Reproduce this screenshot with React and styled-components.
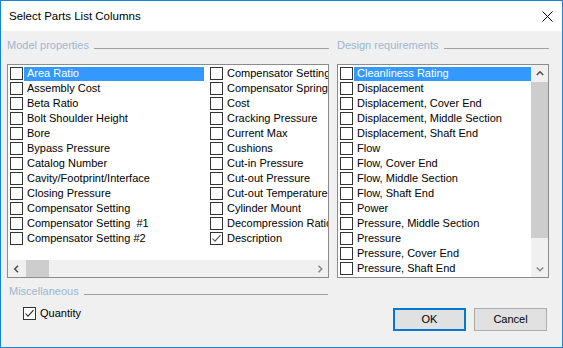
import React from 'react';
import styled, { createGlobalStyle } from 'styled-components';

const modelProps = [
  'Area Ratio',
  'Assembly Cost',
  'Beta Ratio',
  'Bolt Shoulder Height',
  'Bore',
  'Bypass Pressure',
  'Catalog Number',
  'Cavity/Footprint/Interface',
  'Closing Pressure',
  'Compensator Setting',
  'Compensator Setting  #1',
  'Compensator Setting #2',
  'Compensator Setting Range',
  'Compensator Spring Range',
  'Cost',
  'Cracking Pressure',
  'Current Max',
  'Cushions',
  'Cut-in Pressure',
  'Cut-out Pressure',
  'Cut-out Temperature',
  'Cylinder Mount',
  'Decompression Ratio',
  'Description',
];

const designReqs = [
  'Cleanliness Rating',
  'Displacement',
  'Displacement, Cover End',
  'Displacement, Middle Section',
  'Displacement, Shaft End',
  'Flow',
  'Flow, Cover End',
  'Flow, Middle Section',
  'Flow, Shaft End',
  'Power',
  'Pressure, Middle Section',
  'Pressure',
  'Pressure, Cover End',
  'Pressure, Shaft End',
];

export default function App() {
  return (
    <>
      <GlobalStyle />
      <Window>
        <TitleBar>
          <Title>Select Parts List Columns</Title>
          <CloseIcon width="11" height="11" viewBox="0 0 11 11">
            <path d="M0.5 0.5 L10.5 10.5 M10.5 0.5 L0.5 10.5" stroke="#000" strokeWidth="1" />
          </CloseIcon>
        </TitleBar>
        <Body>
          <TopRow>
            <Group $width={322}>
              <GroupHeader>
                <GroupLabel>Model properties</GroupLabel>
                <GroupRule />
              </GroupHeader>
              <ListBox $column>
                <ColumnGrid>
                  {modelProps.map((name, i) => (
                    <Item key={name}>
                      <CheckBox checked={name === 'Description'} light />
                      <ItemText $selected={i === 0} $gapRight={4}>
                        {name}
                      </ItemText>
                    </Item>
                  ))}
                </ColumnGrid>
                <HScroll>
                  <ScrollArrow dir="left" />
                  <HThumb />
                  <Track />
                  <ScrollArrow dir="right" dim />
                </HScroll>
              </ListBox>
            </Group>
            <Group $width={212}>
              <GroupHeader>
                <GroupLabel>Design requirements</GroupLabel>
                <GroupRule />
              </GroupHeader>
              <ListBox>
                <SingleList>
                  {designReqs.map((name, i) => (
                    <Item key={name}>
                      <CheckBox />
                      <ItemText $selected={i === 0} $gapRight={0}>
                        {name}
                      </ItemText>
                    </Item>
                  ))}
                </SingleList>
                <VScroll>
                  <ScrollArrow dir="up" />
                  <VThumb />
                  <Track />
                  <ScrollArrow dir="down" dim />
                </VScroll>
              </ListBox>
            </Group>
          </TopRow>
          <BottomRow>
            <MiscGroup>
              <GroupHeader>
                <GroupLabel>Miscellaneous</GroupLabel>
                <GroupRule />
              </GroupHeader>
              <MiscItem>
                <CheckBox checked />
                <ItemText $gapRight={0} $plain>
                  Quantity
                </ItemText>
              </MiscItem>
            </MiscGroup>
            <ButtonRow>
              <Button type="button" $primary>
                OK
              </Button>
              <Button type="button">Cancel</Button>
            </ButtonRow>
          </BottomRow>
        </Body>
      </Window>
    </>
  );
}

function CheckBox({ checked, light }) {
  return (
    <Box>
      {checked && (
        <svg width="11" height="11" viewBox="0 0 11 11">
          <path
            d="M1.5 5.5 L4 8.2 L9.5 2.2"
            fill="none"
            stroke={light ? '#555' : '#222'}
            strokeWidth="1.1"
          />
        </svg>
      )}
    </Box>
  );
}

function ScrollArrow({ dir, dim }) {
  const paths = {
    up: 'M0.8 5 L4 1.8 L7.2 5',
    down: 'M0.8 2.5 L4 5.7 L7.2 2.5',
    left: 'M5 0.8 L1.8 4 L5 7.2',
    right: 'M2.5 0.8 L5.7 4 L2.5 7.2',
  };
  return (
    <ArrowButton>
      <svg width="8" height="8" viewBox="0 0 8 8">
        <path d={paths[dir]} fill="none" stroke={dim ? '#8a8a8a' : '#505050'} strokeWidth="1.6" />
      </svg>
    </ArrowButton>
  );
}

const GlobalStyle = createGlobalStyle`
  body {
    margin: 0;
    font-family: "Liberation Sans", Arial, sans-serif;
    background: #ffffff;
  }
`;

const Window = styled.div`
  width: 563px;
  height: 348px;
  box-sizing: border-box;
  border: 1px solid #1883d7;
  background: #f0f0f0;
  display: flex;
  flex-direction: column;
`;

const TitleBar = styled.div`
  height: 30px;
  flex: none;
  background: #ffffff;
  display: flex;
  align-items: center;
  justify-content: space-between;
  padding: 0 9px 0 8px;
`;

const Title = styled.span`
  font-size: 11.5px;
  line-height: 14px;
  color: #000;
`;

const CloseIcon = styled.svg`
  display: block;
  margin-top: 1px;
`;

const Body = styled.div`
  flex: 1;
  display: flex;
  flex-direction: column;
  padding: 8px 13px 0 6px;
`;

const TopRow = styled.div`
  display: flex;
  gap: 8px;
`;

const Group = styled.div`
  width: ${(p) => p.$width}px;
  display: flex;
  flex-direction: column;
`;

const GroupHeader = styled.div`
  display: flex;
  height: 14px;
  margin-bottom: 11px;
`;

const GroupLabel = styled.span`
  font-size: 11px;
  line-height: 13px;
  color: #9fb6d0;
  white-space: nowrap;
`;

const GroupRule = styled.div`
  flex: 1;
  height: 1px;
  margin: 9px 0 0 5px;
  background: #a0a0a0;
`;

const ListBox = styled.div`
  height: 214px;
  box-sizing: border-box;
  border: 1px solid #8c8c8c;
  background: #ffffff;
  display: flex;
  flex-direction: ${(p) => (p.$column ? 'column' : 'row')};
  overflow: hidden;
`;

const ColumnGrid = styled.div`
  flex: 1;
  min-height: 0;
  display: grid;
  grid-auto-flow: column;
  grid-template-rows: repeat(12, 15px);
  grid-auto-columns: 200px;
  align-content: start;
  padding-top: 2px;
  overflow: hidden;
`;

const SingleList = styled.div`
  flex: 1;
  display: flex;
  flex-direction: column;
  padding-top: 2px;
  overflow: hidden;
`;

const Item = styled.div`
  height: 15px;
  flex: none;
  display: flex;
  align-items: flex-start;
  padding-left: 2px;
  white-space: pre;
`;

const MiscItem = styled(Item)`
  margin-top: 8px;
  padding-left: 14px;
`;

const Box = styled.div`
  width: 13px;
  height: 13px;
  box-sizing: border-box;
  flex: none;
  border: 1px solid #333333;
  background: #ffffff;
  display: flex;
  align-items: center;
  justify-content: center;
`;

const ItemText = styled.span`
  flex: 1;
  height: 14px;
  margin-left: ${(p) => (p.$plain ? 4 : 1)}px;
  margin-right: ${(p) => p.$gapRight}px;
  padding-left: ${(p) => (p.$plain ? 0 : 3)}px;
  font-size: 11px;
  line-height: 12px;
  color: ${(p) => (p.$selected ? '#ffffff' : '#000000')};
  background: ${(p) => (p.$selected ? '#3399ff' : 'transparent')};
`;

const HScroll = styled.div`
  height: 17px;
  flex: none;
  display: flex;
  background: #f0f0f0;
`;

const VScroll = styled.div`
  width: 17px;
  flex: none;
  display: flex;
  flex-direction: column;
  background: #f0f0f0;
`;

const ArrowButton = styled.div`
  width: 17px;
  height: 17px;
  flex: none;
  display: flex;
  align-items: center;
  justify-content: center;
`;

const HThumb = styled.div`
  width: 23px;
  margin-left: 1px;
  background: #cdcdcd;
`;

const VThumb = styled.div`
  height: 156px;
  background: #cdcdcd;
`;

const Track = styled.div`
  flex: 1;
`;

const BottomRow = styled.div`
  display: flex;
  justify-content: space-between;
  align-items: flex-start;
`;

const MiscGroup = styled.div`
  width: 319px;
  margin-left: 2px;
  padding-top: 7px;
  display: flex;
  flex-direction: column;

  ${GroupHeader} {
    margin-bottom: 0;
  }
`;

const ButtonRow = styled.div`
  display: flex;
  gap: 8px;
  margin: 30px 2px 0 0;
`;

const Button = styled.button`
  width: 73px;
  height: 23px;
  box-sizing: border-box;
  padding: 0;
  border: ${(p) => (p.$primary ? '2px solid #0078d7' : '1px solid #adadad')};
  background: #e1e1e1;
  font-family: "Liberation Sans", Arial, sans-serif;
  font-size: 11px;
  line-height: 13px;
  color: #000;
  display: flex;
  align-items: center;
  justify-content: center;
`;
